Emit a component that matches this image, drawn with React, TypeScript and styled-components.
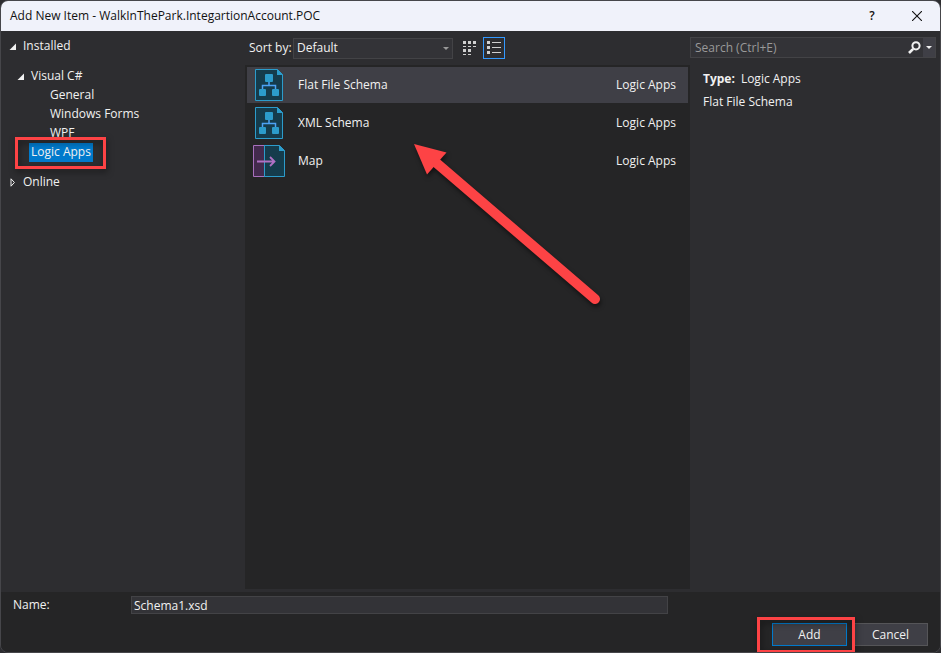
import React from "react";
import styled, { createGlobalStyle } from "styled-components";

const GlobalStyle = createGlobalStyle`
  *, *::before, *::after { box-sizing: border-box; }
  body { margin: 0; background: #2d2d30; }
  body, button, input, select {
    font-family: "Open Sans", "Noto Sans", sans-serif;
    font-size: 12px;
    line-height: 18px;
    color: #f1f1f1;
  }
  button, input, select { border-radius: 0; margin: 0; }
  ul { list-style: none; margin: 0; padding: 0; }
  p, h1 { margin: 0; }
`;

const Dialog = styled.main`
  display: flex;
  flex-direction: column;
  min-height: 100vh;
  overflow: hidden;
  background: #2d2d30;
  border: 1px solid #46464a;
  border-radius: 8px;
`;

const TitleBar = styled.header`
  display: flex;
  align-items: center;
  height: 30px;
  padding: 0 11px 0 9px;
  background: #f0f2fa;
  color: #111;
`;

const Title = styled.h1`
  flex: 1;
  font-size: 12px;
  font-weight: 400;
`;

const TitleButton = styled.button`
  display: flex;
  align-items: center;
  justify-content: center;
  width: 24px;
  height: 24px;
  margin-left: 21px;
  padding: 0;
  border: 0;
  background: none;
  color: #111;
  font-weight: 600;
`;

const Body = styled.div`
  flex: 1;
  display: grid;
  grid-template-columns: 244px 1fr 250px;
`;

const Tree = styled.nav`
  padding: 6px 0;
`;

const TreeGroup = styled.ul`
  margin: 11px 0;
`;

const TreeItem = styled.li<{ $indent: number }>`
  display: flex;
  align-items: center;
  position: relative;
  height: 19px;
  padding-left: ${(p) => p.$indent}px;
`;

const Toggle = styled.button`
  display: flex;
  width: 13px;
  padding: 0;
  border: 0;
  background: none;
`;

const TreeLink = styled.a<{ $selected?: boolean }>`
  height: 19px;
  padding: 0 2px;
  color: #f1f1f1;
  background: ${(p) => (p.$selected ? "#007acc" : "transparent")};
  text-decoration: none;
`;

const Highlight = styled.span<{ $left: number; $right: number }>`
  position: absolute;
  inset: -6px -${(p) => p.$right}px -7px -${(p) => p.$left}px;
  border: 3px solid #fd4345;
  filter: drop-shadow(1px 3px 3px rgba(0, 0, 0, 0.5));
  pointer-events: none;
`;

const Marked = styled.span`
  display: flex;
  position: relative;
`;

const FrontMarked = styled(Marked)`
  z-index: 1;
`;

const Center = styled.section`
  display: flex;
  flex-direction: column;
  position: relative;
  padding-bottom: 3px;
`;

const Toolbar = styled.div`
  display: flex;
  align-items: center;
  height: 34px;
  padding-left: 4px;
`;

const SortLabel = styled.label`
  width: 44px;
  white-space: nowrap;
`;

const SelectBox = styled.div`
  display: grid;
  align-items: center;
  width: 160px;
  margin-right: 6px;

  > * { grid-area: 1 / 1; }
  > svg { justify-self: end; margin-right: 4px; pointer-events: none; }
`;

const SortSelect = styled.select`
  appearance: none;
  width: 100%;
  height: 21px;
  padding: 0 3px;
  line-height: 18px;
  border: 1px solid #434346;
  background: #333337;
`;

const ViewButtons = styled.div`
  display: flex;
  gap: 2px;
`;

const ViewButton = styled.button<{ $active?: boolean }>`
  display: flex;
  align-items: center;
  justify-content: center;
  width: 22px;
  height: 22px;
  padding: 0;
  border: 1px solid ${(p) => (p.$active ? "#3399ff" : "transparent")};
  background: none;
`;

const Templates = styled.ul`
  flex: 1;
  display: flex;
  flex-direction: column;
  gap: 2px;
  padding: 2px;
  background: #252526;
`;

const Template = styled.li<{ $selected?: boolean }>`
  display: flex;
  align-items: center;
  height: 36px;
  padding: 0 12px 0 6px;
  background: ${(p) => (p.$selected ? "#3f3f46" : "transparent")};
`;

const TemplateName = styled.span`
  flex: 1;
  margin-left: 13px;
`;

const Arrow = styled.svg`
  position: absolute;
  left: 165px;
  top: 109px;
  overflow: visible;
  filter: drop-shadow(1px 3px 2px rgba(0, 0, 0, 0.5));
  pointer-events: none;
`;

const Details = styled.aside`
  padding: 6px 4px 0 0;
`;

const SearchBox = styled.form`
  display: flex;
  height: 21px;
  margin-bottom: 12px;
  border: 1px solid #434346;
  background: #333337;
`;

const SearchInput = styled.input`
  flex: 1;
  min-width: 0;
  padding: 0 4px;
  border: 0;
  background: none;

  &::placeholder { color: #999; opacity: 1; }
`;

const SearchButton = styled.button<{ $drop?: boolean }>`
  display: flex;
  align-items: center;
  justify-content: center;
  width: ${(p) => (p.$drop ? 12 : 17)}px;
  padding: 0;
  border: 0;
  background: ${(p) => (p.$drop ? "#3f3f46" : "none")};
`;

const DetailLine = styled.p`
  padding-left: 13px;
  margin-bottom: 5px;

  strong { margin-right: 6px; }
`;

const Footer = styled.footer`
  padding: 4px 12px 6px;
  background: #252526;
`;

const NameRow = styled.div`
  display: grid;
  grid-template-columns: 118px 1fr;
  align-items: center;
  margin-right: 260px;
`;

const NameInput = styled.input`
  width: 100%;
  height: 18px;
  padding: 0 2px;
  line-height: 16px;
  border: 1px solid #434346;
  background: #333337;
`;

const Actions = styled.div`
  display: flex;
  justify-content: flex-end;
  gap: 6px;
  margin-top: 9px;
`;

const ActionButton = styled.button<{ $primary?: boolean }>`
  width: 75px;
  height: 23px;
  padding: 0;
  border: 1px solid ${(p) => (p.$primary ? "#007acc" : "#555558")};
  background: #3f3f46;
`;

const OpenTriangle = () => (
  <svg width="8" height="8" viewBox="0 0 8 8"><path d="M8 .5v6.500H1.500z" fill="#f1f1f1" /></svg>
);

const ClosedTriangle = () => (
  <svg width="8" height="9" viewBox="0 0 8 9"><path d="M3 .8 6.400 4.500 3 8.200z" fill="none" stroke="#f1f1f1" /></svg>
);

const DropTriangle = ({ color }: { color: string }) => (
  <svg width="6" height="3" viewBox="0 0 6 3"><path d="M0 0h6L3 3z" fill={color} /></svg>
);

const TilesIcon = () => (
  <svg width="14" height="14" viewBox="0 0 14 14" fill="#d0d0d0" shapeRendering="crispEdges">
    <path d="M0 0h3v3H0zM5 0h3v3H5zM10 0h3v3h-3zM0 5h3v1H0zM5 5h3v1H5zM10 5h3v1h-3zM0 8h3v3H0zM5 8h3v3H5zM0 13h3v1H0zM5 13h3v1H5z" />
  </svg>
);

const ListIcon = () => (
  <svg width="14" height="14" viewBox="0 0 14 14" fill="#d0d0d0" shapeRendering="crispEdges">
    <path d="M0 0h3v3H0zM0 5h3v3H0zM0 10h3v3H0zM5 1h9v1H5zM5 6h9v1H5zM5 11h9v1H5z" />
  </svg>
);

const SchemaIcon = () => (
  <svg width="32" height="32" viewBox="0 0 32 32">
    <path d="M2.500.5h22l5 5v26h-27z" fill="#153c4c" stroke="#2c9ccb" />
    <path d="M24 0v6h6z" fill="#2c9ccb" />
    <path d="M16 12v4M9.500 20v-3.500h13V20" fill="none" stroke="#4da3f5" strokeWidth="1.500" />
    <rect x="12" y="5" width="8" height="8" rx="1" fill="#2c9ccb" />
    <rect x="6" y="20" width="7" height="7" rx="1" fill="#2c9ccb" />
    <rect x="19" y="20" width="7" height="7" rx="1" fill="#2c9ccb" />
  </svg>
);

const MapIcon = () => (
  <svg width="32" height="32" viewBox="0 0 32 32">
    <path d="M11.500.5h15l5 5v26h-20z" fill="#153c4c" stroke="#2c9ccb" />
    <path d="M26 0v6h6z" fill="#2c9ccb" />
    <path d="M11 .5H.5v31H11" fill="#432a4d" stroke="#a870bd" />
    <path d="M11.500 0v32" stroke="#2c9ccb" />
    <path d="M4 16.500h17M17 12l4.500 4.500L17 21" fill="none" stroke="#b070c4" strokeWidth="1.800" />
  </svg>
);

const SearchIcon = () => (
  <svg width="13" height="13" viewBox="0 0 13 13" fill="none" stroke="#f1f1f1">
    <circle cx="8" cy="4.800" r="3.600" strokeWidth="2" />
    <path d="M5.200 7.800 1 12" strokeWidth="2.600" />
  </svg>
);

const CloseIcon = () => (
  <svg width="10" height="10" viewBox="0 0 10 10"><path d="M0 0l10 10M10 0 0 10" stroke="#111" strokeWidth="1.100" /></svg>
);

const templates = [
  { name: "Flat File Schema", Icon: SchemaIcon },
  { name: "XML Schema", Icon: SchemaIcon },
  { name: "Map", Icon: MapIcon },
];

export default function App() {
  return (
    <>
      <GlobalStyle />
      <Dialog>
        <TitleBar>
          <Title>Add New Item - WalkInThePark.IntegartionAccount.POC</Title>
          <TitleButton aria-label="Help">?</TitleButton>
          <TitleButton aria-label="Close"><CloseIcon /></TitleButton>
        </TitleBar>

        <Body>
          <Tree aria-label="Categories">
            <TreeItem as="div" $indent={7}>
              <Toggle aria-label="Collapse Installed"><OpenTriangle /></Toggle>
              <TreeLink href="#installed">Installed</TreeLink>
            </TreeItem>
            <TreeGroup>
              <TreeItem $indent={15}>
                <Toggle aria-label="Collapse Visual C#"><OpenTriangle /></Toggle>
                <TreeLink href="#csharp">Visual C#</TreeLink>
              </TreeItem>
              <TreeItem $indent={47}><TreeLink href="#general">General</TreeLink></TreeItem>
              <TreeItem $indent={47}><TreeLink href="#forms">Windows Forms</TreeLink></TreeItem>
              <TreeItem $indent={47}><TreeLink href="#wpf">WPF</TreeLink></TreeItem>
              <TreeItem $indent={28}>
                <Marked>
                  <TreeLink href="#logic" $selected>Logic Apps</TreeLink>
                  <Highlight $left={14} $right={13} />
                </Marked>
              </TreeItem>
            </TreeGroup>
            <TreeItem as="div" $indent={7}>
              <Toggle aria-label="Expand Online"><ClosedTriangle /></Toggle>
              <TreeLink href="#online">Online</TreeLink>
            </TreeItem>
          </Tree>

          <Center>
            <Toolbar>
              <SortLabel htmlFor="sort">Sort by:</SortLabel>
              <SelectBox>
                <SortSelect id="sort"><option>Default</option></SortSelect>
                <DropTriangle color="#999" />
              </SelectBox>
              <ViewButtons>
                <ViewButton aria-label="Medium icons"><TilesIcon /></ViewButton>
                <ViewButton aria-label="Small icons" $active><ListIcon /></ViewButton>
              </ViewButtons>
            </Toolbar>
            <Templates>
              {templates.map(({ name, Icon }, i) => (
                <Template key={name} $selected={i === 0}>
                  <Icon />
                  <TemplateName>{name}</TemplateName>
                  <span>Logic Apps</span>
                </Template>
              ))}
            </Templates>
            <Arrow width="192" height="166" viewBox="0 0 192 166" aria-hidden="true">
              <path d="M23 20 185 159" stroke="#fd4345" strokeWidth="10" strokeLinecap="round" />
              <path d="M4 4 36.500 12.500 17 34.500z" fill="#fd4345" />
            </Arrow>
          </Center>

          <Details>
            <SearchBox>
              <SearchInput aria-label="Search" placeholder="Search (Ctrl+E)" />
              <SearchButton type="button" aria-label="Search"><SearchIcon /></SearchButton>
              <SearchButton type="button" aria-label="Search options" $drop><DropTriangle color="#f1f1f1" /></SearchButton>
            </SearchBox>
            <DetailLine><strong>Type:</strong>Logic Apps</DetailLine>
            <DetailLine>Flat File Schema</DetailLine>
          </Details>
        </Body>

        <Footer>
          <NameRow>
            <label htmlFor="name">Name:</label>
            <NameInput id="name" defaultValue="Schema1.xsd" />
          </NameRow>
          <Actions>
            <FrontMarked>
              <ActionButton $primary>Add</ActionButton>
              <Highlight $left={15} $right={8} />
            </FrontMarked>
            <ActionButton>Cancel</ActionButton>
          </Actions>
        </Footer>
      </Dialog>
    </>
  );
}
